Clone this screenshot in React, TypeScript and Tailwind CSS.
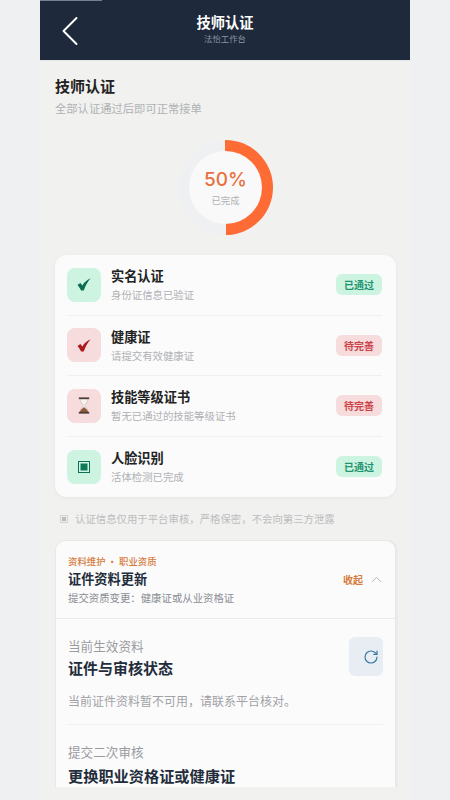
import React from 'react';
import { ChevronUp, RotateCw } from 'lucide-react';

const font = "font-['Noto_Sans_CJK_SC','Noto_Sans',sans-serif]";

const rows = [
  { title: '实名认证', desc: '身份证信息已验证', ok: true, icon: 'check' },
  { title: '健康证', desc: '请提交有效健康证', ok: false, icon: 'check' },
  { title: '技能等级证书', desc: '暂无已通过的技能等级证书', ok: false, icon: 'hourglass' },
  { title: '人脸识别', desc: '活体检测已完成', ok: true, icon: 'face' },
];

function RowIcon({ kind, ok }: { kind: string; ok: boolean }) {
  if (kind === 'check') {
    return (
      <svg width="14" height="13" viewBox="0 0 14 13">
        <path d="M0.5 7 L3.4 5 L5.4 7.4 C7 4.4 9.6 2 13.6 0.2 C10.6 3.6 8.2 7.8 6.8 12.6 L4 12.6 C3.2 10.6 2 8.6 0.5 7 Z" fill={ok ? '#0b6e50' : '#ab1a1f'} />
      </svg>
    );
  }
  if (kind === 'hourglass') {
    return (
      <svg width="12" height="17" viewBox="0 0 12 17">
        <path d="M2 2 H10 C10 5 7.4 7 6.8 8.5 C7.4 10 10 12 10 15 H2 C2 12 4.6 10 5.2 8.5 C4.6 7 2 5 2 2 Z" fill="#f6f2ee" stroke="#b9aca4" strokeWidth="0.5" />
        <path d="M1.8 15 C2.6 12.4 4.8 11.4 6 10 C7.2 11.4 9.4 12.4 10.2 15 Z" fill="#8f5a39" />
        <rect x="0.8" y="0.4" width="10.4" height="1.7" fill="#4a3b34" />
        <rect x="0.8" y="14.9" width="10.4" height="1.7" fill="#4a3b34" />
      </svg>
    );
  }
  return (
    <svg width="12" height="12" viewBox="0 0 12 12">
      <rect x="0.5" y="0.5" width="11" height="11" fill="#d3f3e4" stroke="#0f6f55" strokeWidth="1" />
      <rect x="2.5" y="2.5" width="7" height="7" fill="#0f7a5a" />
    </svg>
  );
}

export default function App() {
  return (
    <div className={`h-[800px] overflow-hidden bg-[#eff0f2] pl-[40px] ${font}`}>
      <div className="h-[800px] w-[370px] bg-[#f1f1ef]">
        <header className="relative flex h-[61px] items-center justify-center border-b border-[#e4e6ea] bg-[#1e293b]">
          <span className="absolute left-0 top-0 h-[1px] w-[62px] bg-[#77808c]" />
          <svg className="absolute left-[21px] top-[16px]" width="18" height="30" viewBox="0 0 18 30" fill="none">
            <path d="M15.5 2 L2.5 15 L15.5 28" stroke="white" strokeWidth="2" strokeLinecap="round" strokeLinejoin="round" />
          </svg>
          <div className="flex flex-col items-center mt-[-3px]">
            <div className="text-[14.25px] leading-[20px] font-semibold text-white">技师认证</div>
            <div className="text-[8.4px] leading-[13px] text-[#8b95a5]">法怡工作台</div>
          </div>
        </header>

        <div className="pl-[15px] pr-[14px]">
          <h1 className="mt-[15px] text-[15px] leading-[20px] font-semibold text-[#222]">技师认证</h1>
          <p className="mt-[4px] text-[11.3px] leading-[16px] text-[#b0b1b5]">全部认证通过后即可正常接单</p>

          <div className="mt-[24px] flex justify-center">
            <div className="flex h-[95px] w-[95px] items-center justify-center rounded-full bg-[conic-gradient(#ff6b35_0_50%,#eff0f2_50%_100%)]">
              <div className="flex h-[73px] w-[73px] flex-col items-center justify-center rounded-full bg-[#f9f9f9]">
                <div className="mt-[-1px] font-['Inter',sans-serif] text-[19px] leading-[24px] font-medium text-[#e8703f]">50%</div>
                <div className="mt-[2px] text-[9.3px] leading-[12px] text-[#b0b1b5]">已完成</div>
              </div>
            </div>
          </div>

          <div className="mt-[20px] rounded-[12px] bg-[#fbfbfb] pl-[12px] pr-[14px] shadow-[0_1px_4px_rgba(0,0,0,0.05)]">
            {rows.map((r, i) => (
              <div key={r.title} className={`flex h-[60.5px] items-center ${i < 3 ? 'border-b border-[#f0f0f0]' : ''}`}>
                <div className={`flex h-[34px] w-[34px] items-center justify-center rounded-[8px] ${r.ok ? 'bg-[#cdf3e1]' : 'bg-[#f6dcdc]'}`}>
                  <RowIcon kind={r.icon} ok={r.ok} />
                </div>
                <div className="ml-[10px] flex-1">
                  <div className="text-[13.2px] leading-[18px] font-semibold text-[#222]">{r.title}</div>
                  <div className="mt-[2px] text-[10.4px] leading-[15px] text-[#b0b1b5]">{r.desc}</div>
                </div>
                <div className={`flex h-[21px] w-[46px] items-center justify-center rounded-[6px] text-[10px] font-semibold ${r.ok ? 'bg-[#cdf3e1] text-[#1f9470]' : 'bg-[#f6dcdc] text-[#cc4349]'}`}>
                  {r.ok ? '已通过' : '待完善'}
                </div>
              </div>
            ))}
          </div>

          <div className="mt-[14px] flex items-center px-[5px] text-[10.4px] leading-[16px] text-[#bcbdc0]">
            <span className="mr-[7px] flex h-[8px] w-[8px] items-center justify-center border border-[#d5d6d8] bg-[#eaeaea]">
              <span className="h-[4px] w-[4px] bg-[#bdbec1]" />
            </span>
            认证信息仅用于平台审核，严格保密，不会向第三方泄露
          </div>

          <div className="mt-[13px] h-[247px] overflow-hidden rounded-t-[10px] border border-b-0 border-[#e8e8e8] bg-[#fbfbfb] shadow-[2px_0_0_#ebebeb]">
            <div className="flex h-[78px] items-center border-b border-[#ececec] px-[12px]">
              <div className="flex-1">
                <div className="text-[9.4px] leading-[14px] font-medium text-[#d67a3c]">资料维护 · 职业资质</div>
                <div className="mt-[2px] text-[13.2px] leading-[18px] font-semibold text-[#222c3a]">证件资料更新</div>
                <div className="mt-[2px] text-[10.4px] leading-[16px] text-[#8a8d93]">提交资质变更：健康证或从业资格证</div>
              </div>
              <span className="text-[10px] font-semibold text-[#d67a3c]">收起</span>
              <ChevronUp className="ml-[5px] mr-[-2px] h-[17px] w-[17px] text-[#b0b1b5]" strokeWidth={1.3} />
            </div>
            <div className="px-[12px]">
              <div className="flex items-start border-b border-[#f0f0f0] pb-[14px] pt-[18px]">
                <div className="flex-1">
                  <div className="text-[12.6px] leading-[18px] text-[#9a9ca1]">当前生效资料</div>
                  <div className="mt-[3px] text-[15px] leading-[20px] font-semibold text-[#222c3a]">证件与审核状态</div>
                  <div className="mt-[14px] text-[12px] leading-[18px] text-[#a0a2a6]">当前证件资料暂不可用，请联系平台核对。</div>
                </div>
                <div className="flex h-[39px] w-[34px] items-center justify-start rounded-[6px] bg-[#e8edf3] pl-[14px]">
                  <RotateCw className="h-[16px] w-[16px] text-[#3a7aa3]" strokeWidth={1.8} />
                </div>
              </div>
              <div className="pt-[18px]">
                <div className="text-[12.6px] leading-[18px] text-[#9a9ca1]">提交二次审核</div>
                <div className="mt-[4px] text-[15.2px] leading-[20px] font-semibold text-[#222c3a]">更换职业资格证或健康证</div>
              </div>
            </div>
          </div>
        </div>
      </div>
    </div>
  );
}
